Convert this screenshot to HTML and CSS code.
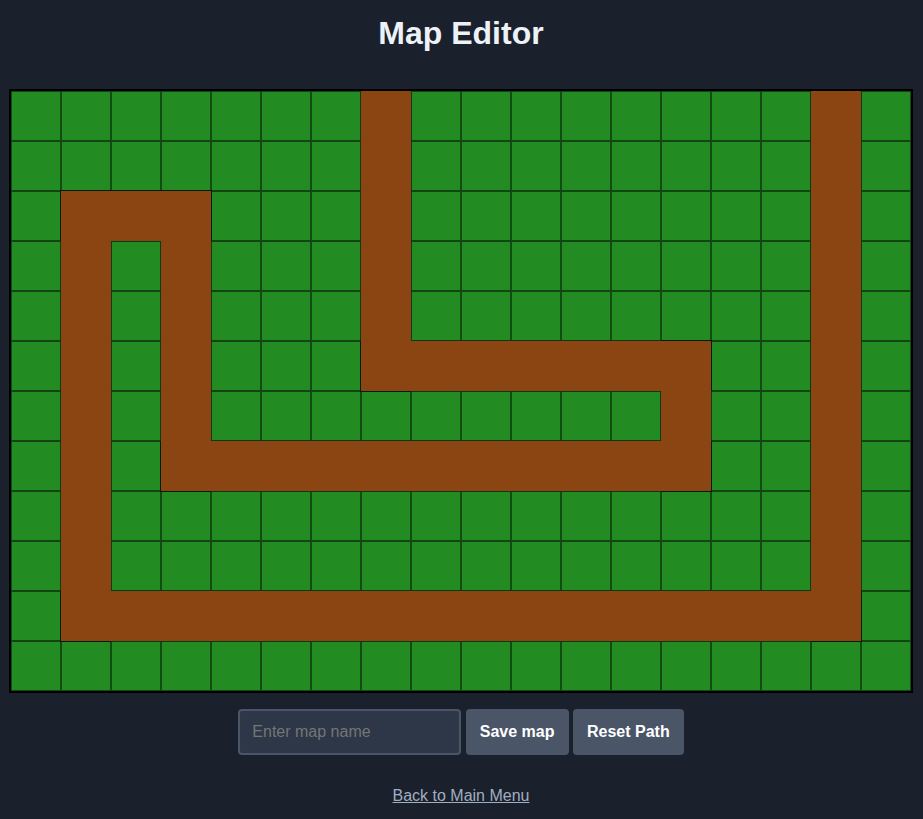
FILE: index.html
```html
<!DOCTYPE html>
<html lang="en">
<head>
<meta charset="utf-8">
<meta name="viewport" content="width=device-width, initial-scale=1">
<title>Map Editor</title>
<link rel="stylesheet" href="styles.css">
</head>
<body>
<main class="editor">
  <h1 class="title">Map Editor</h1>
  <svg class="map" viewBox="0 0 900 600" role="img" aria-label="Map grid with path">
    <defs>
      <pattern id="cell" width="50" height="50" patternUnits="userSpaceOnUse">
        <rect class="grass" width="50" height="50"/>
        <path class="row-line" d="M0 0h50v1h-50zM0 49h50v1h-50z"/>
        <path class="column-line" d="M0 1h1v48h-1zM49 1h1v48h-1z"/>
      </pattern>
    </defs>
    <rect width="900" height="600" fill="url(#cell)"/>
    <path class="path-edge" d="M350 0V300H650V350H200V100H50V550H850V0H800V500H100V150H150V400H700V250H400V0Z"/>
    <path class="path-corner" d="M350 250V300H400M650 250H700V300M700 350V400H650M150 350V400H200M50 150V100H200V150M50 500V550H100M800 550H850V500"/>
    <path class="path-fill" d="M350 0V300H650V350H200V100H50V550H850V0H800V500H100V150H150V400H700V250H400V0Z"/>
  </svg>
  <form class="controls">
    <input class="name" type="text" placeholder="Enter map name" aria-label="Map name">
    <button class="button" type="button">Save map</button>
    <button class="button" type="button">Reset Path</button>
  </form>
  <a class="back" href="#">Back to Main Menu</a>
</main>
</body>
</html>
```
FILE: styles.css
```css
* {
  box-sizing: border-box;
}

body {
  margin: 0;
  background: #1a202c;
  color: #edf2f7;
  font-family: "Liberation Sans", Arial, sans-serif;
  font-size: 16px;
}

.editor {
  display: flex;
  flex-direction: column;
  align-items: center;
  padding: 14px 10px 14px 9px;
}

.title {
  margin: 0 0 37px;
  font-size: 32px;
  line-height: 38px;
}

.map {
  display: block;
  width: 100%;
  max-width: 904px;
  border: 2px solid #000;
}

.grass {
  fill: #228b22;
}

.row-line {
  fill: #000;
  fill-opacity: 0.5;
}

.column-line {
  fill: #000;
  fill-opacity: 0.45;
}

.path-edge,
.path-corner {
  fill: none;
  stroke: #000;
  stroke-width: 2;
}

.path-edge {
  stroke-opacity: 0.2;
}

.path-corner {
  stroke-opacity: 0.5;
}

.path-fill {
  fill: #8b4513;
}

.controls {
  margin: 16px 0 32px;
  text-align: center;
}

.name {
  width: 223px;
  height: 46px;
  padding: 0 12px;
  border: 2px solid #4a5568;
  border-radius: 4px;
  background: #2d3748;
  color: #edf2f7;
  font: inherit;
}

.name::placeholder {
  color: #757575;
}

.button {
  height: 46px;
  padding: 0 14px;
  border: 0;
  border-radius: 4px;
  background: #4a5568;
  color: #fff;
  font: inherit;
  font-weight: bold;
}

.back {
  color: #a0aec0;
  line-height: 18px;
}
```
